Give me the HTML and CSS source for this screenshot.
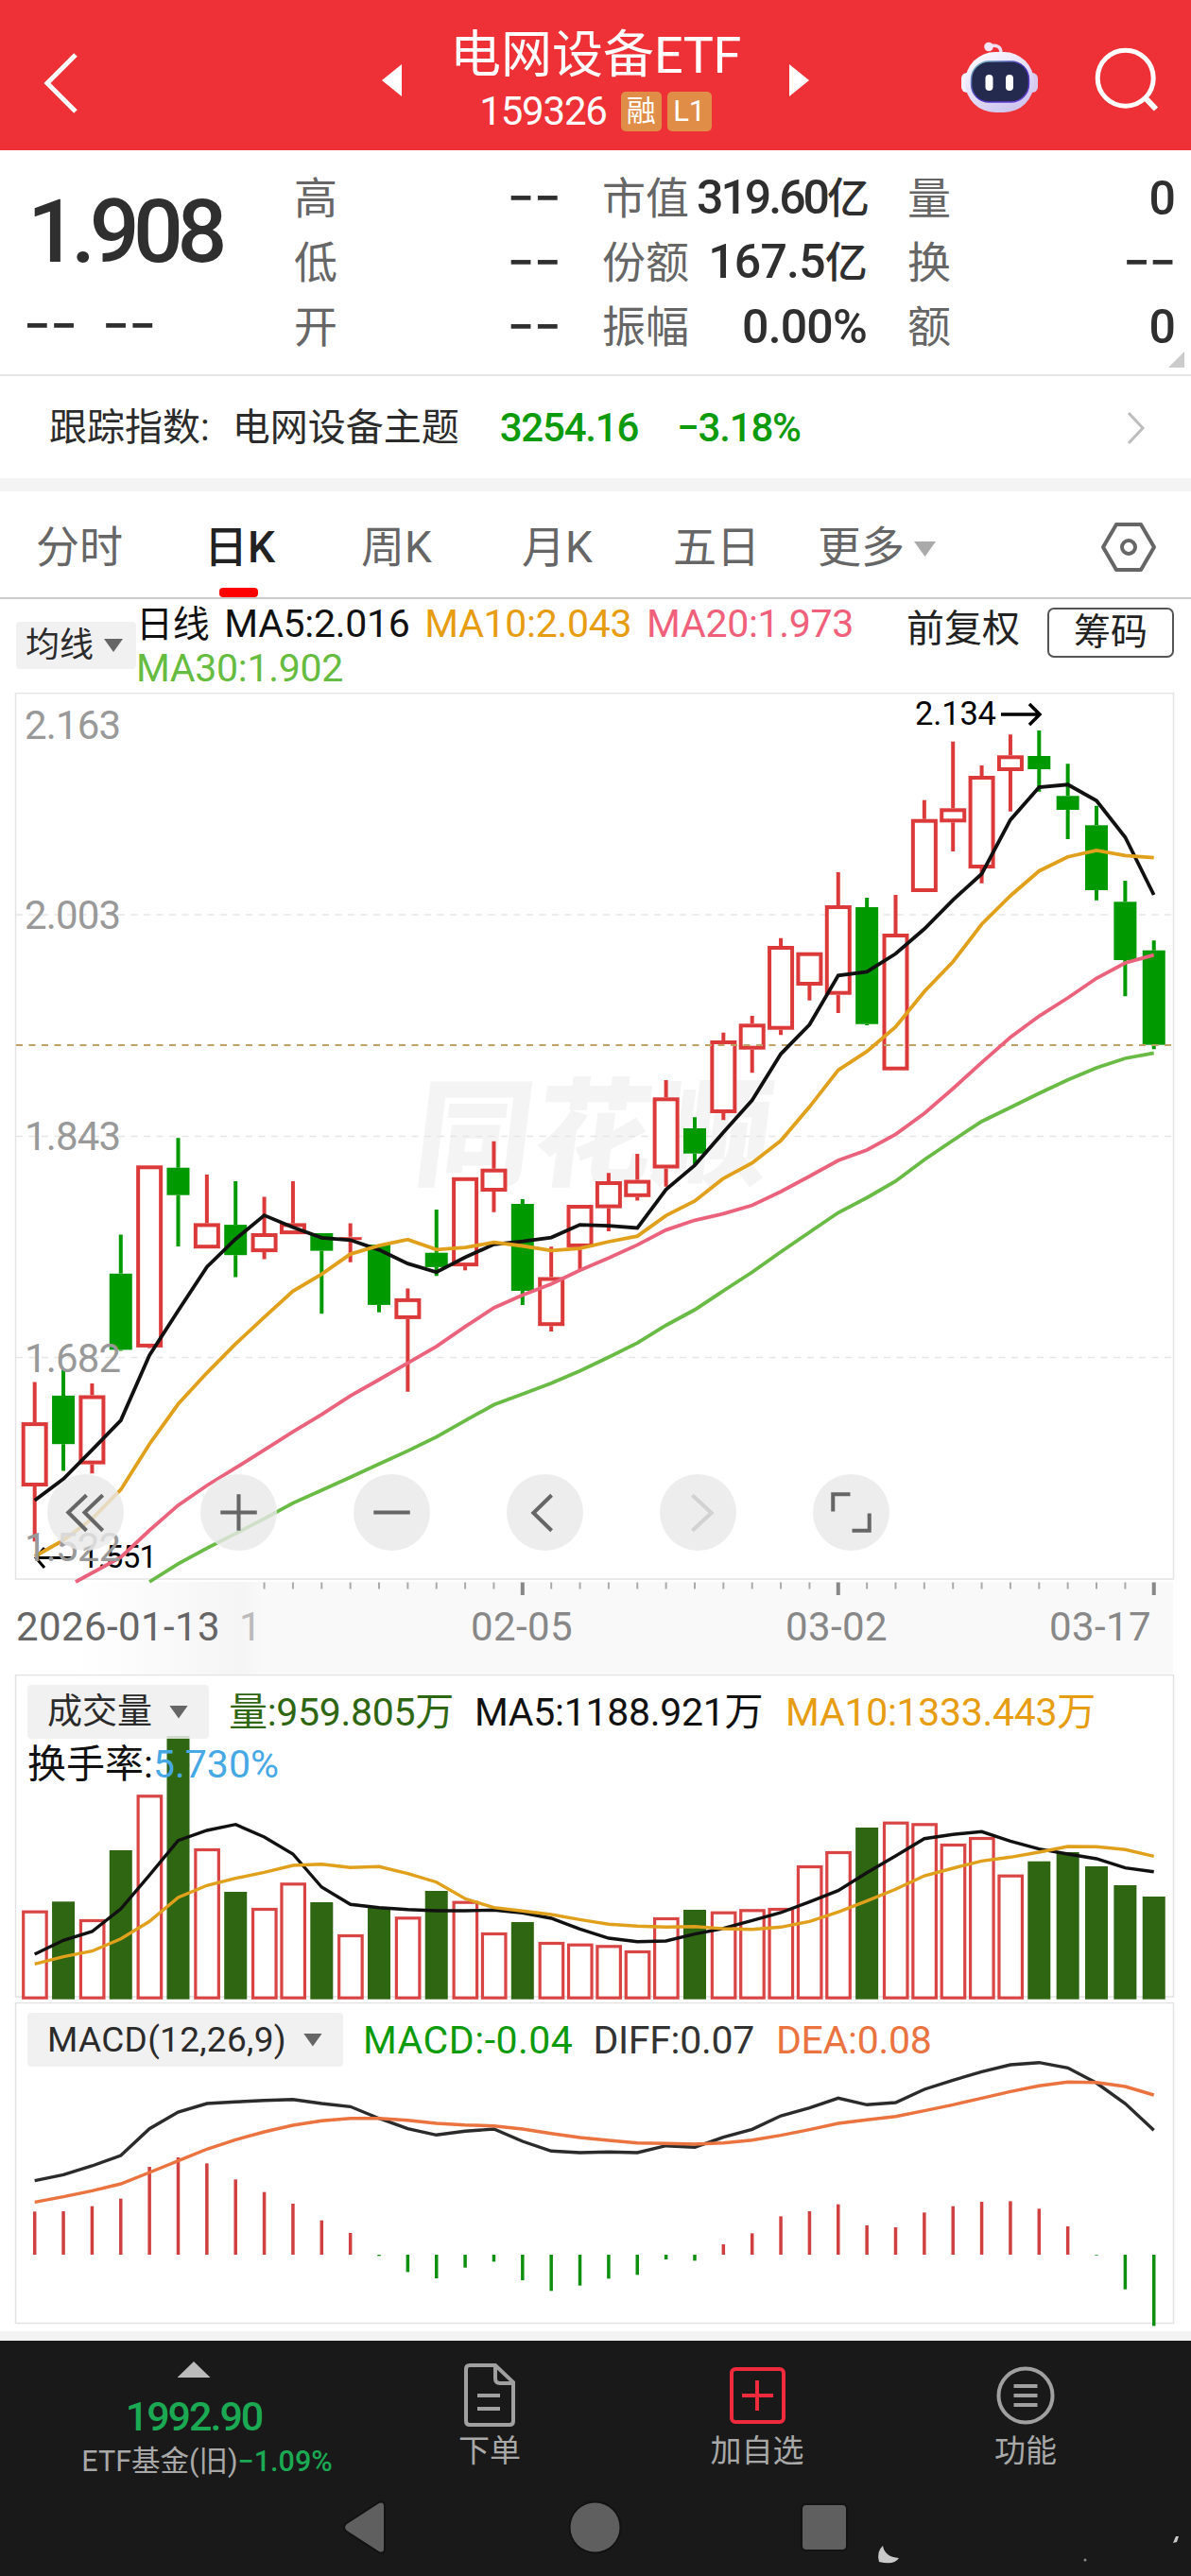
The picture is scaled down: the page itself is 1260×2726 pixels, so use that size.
FILE: index.html
```html
<!DOCTYPE html>
<html lang="zh-CN">
<head>
    <meta charset="UTF-8">
    <meta name="viewport" content="width=device-width, initial-scale=1.0">
    <title>电网设备ETF 159326</title>
    <link rel="stylesheet" href="styles.css">
</head>
<body>
    <header class="header">
        <svg class="back" width="40" height="68" viewBox="0 0 40 68"><path d="M35 4 L5 34 L35 64" fill="none" stroke="#fff" stroke-width="5"/></svg>
        <svg class="prev" width="21" height="34" viewBox="0 0 21 34"><path d="M21 0 V34 L0 17Z" fill="#fff"/></svg>
        <div class="title">
            <div class="name">电网设备<span class="etf">ETF</span></div>
            <div class="code"><span class="num">159326</span><span class="badge">融</span><span class="badge l1">L1</span></div>
        </div>
        <svg class="next" width="21" height="34" viewBox="0 0 21 34"><path d="M0 0 V34 L21 17Z" fill="#fff"/></svg>
        <svg class="robot" width="82" height="78" viewBox="1017 42 82 78">
            <defs>
                <linearGradient id="head" x1="0" y1="0" x2="0.6" y2="1">
                    <stop offset="0" stop-color="#fff"/>
                    <stop offset="0.6" stop-color="#e4dcfa"/>
                    <stop offset="1" stop-color="#cfc6ee"/>
                </linearGradient>
                <linearGradient id="rim" x1="0" y1="0" x2="1" y2="1">
                    <stop offset="0" stop-color="#7fc9c4"/>
                    <stop offset="0.5" stop-color="#4630b8"/>
                    <stop offset="1" stop-color="#7044e0"/>
                </linearGradient>
            </defs>
            <path d="M1046 49 Q1059 46 1059 56" fill="none" stroke="#efdcf0" stroke-width="3.5"/>
            <circle cx="1046" cy="49.500" r="4.800" fill="#f4e6f6"/>
            <rect x="1017" y="77" width="12" height="21" rx="6" fill="#f4f0fc"/>
            <rect x="1086" y="77" width="12" height="21" rx="6" fill="#d9c9ee"/>
            <rect x="1021" y="55" width="73" height="64" rx="32" fill="url(#head)"/>
            <rect x="1027.500" y="65" width="61" height="43" rx="19" fill="#232a4d" stroke="url(#rim)" stroke-width="1.500"/>
            <rect x="1042.500" y="79" width="8" height="17" rx="4" fill="#fff"/>
            <rect x="1064" y="79" width="8" height="17" rx="4" fill="#fff"/>
        </svg>
        <svg class="search" width="68" height="68" viewBox="0 0 68 68"><circle cx="32.700" cy="32.700" r="29.500" fill="none" stroke="#fff" stroke-width="5"/><path d="M53 53 L65 65.500" stroke="#fff" stroke-width="6"/></svg>
    </header>

    <section class="quote">
        <div class="last">
            <div class="price">1.908</div>
            <div class="change"><span>−−</span><span>−−</span></div>
        </div>
        <dl class="col c1">
            <div><dt>高</dt><dd>−−</dd></div>
            <div><dt>低</dt><dd>−−</dd></div>
            <div><dt>开</dt><dd>−−</dd></div>
        </dl>
        <dl class="col c2">
            <div><dt>市值</dt><dd class="tight">319.60<i>亿</i></dd></div>
            <div><dt>份额</dt><dd>167.5<i>亿</i></dd></div>
            <div><dt>振幅</dt><dd>0.00%</dd></div>
        </dl>
        <dl class="col c3">
            <div><dt>量</dt><dd>0</dd></div>
            <div><dt>换</dt><dd>−−</dd></div>
            <div><dt>额</dt><dd>0</dd></div>
        </dl>
        <div class="corner"></div>
    </section>

    <section class="index">
        <span>跟踪指数:</span>
        <span class="theme">电网设备主题</span>
        <span class="green">3254.16</span>
        <span class="green percent">−3.18%</span>
        <svg width="20" height="36" viewBox="0 0 20 36"><path d="M2 2 L17 18 L2 34" fill="none" stroke="#bdbdbd" stroke-width="3"/></svg>
    </section>

    <nav class="tabs">
        <span class="tab">分时</span>
        <span class="tab active">日K</span>
        <span class="tab">周K</span>
        <span class="tab">月K</span>
        <span class="tab">五日</span>
        <span class="tab more">更多<i class="tri"></i></span>
        <svg width="60" height="54" viewBox="0 0 60 54"><path d="M17 3 H43 L57 27 L43 51 H17 L3 27Z" fill="none" stroke="#666" stroke-width="4" stroke-linejoin="round"/><circle cx="30" cy="27" r="7" fill="none" stroke="#666" stroke-width="4"/></svg>
    </nav>

    <section class="ma">
        <div class="drop avg">均线<i class="tri"></i></div>
        <div class="legend">
            <span>日线</span> <span>MA5:2.016</span> <span class="orange">MA10:2.043</span> <span class="pink">MA20:1.973</span><br><span class="lime">MA30:1.902</span>
        </div>
        <span class="adjust">前复权</span>
        <span class="chip">筹码</span>
    </section>

    <section class="kline">
        <svg id="kline" width="1260" height="957" viewBox="0 733 1260 957"></svg>
        <div class="tools">
            <span><svg viewBox="0 0 80 80"><path d="M41 22 L22 40 L41 59 M58 22 L39 40 L58 59"/></svg></span>
            <span><svg viewBox="0 0 80 80"><path d="M21 40 H59 M40 21 V59"/></svg></span>
            <span><svg viewBox="0 0 80 80"><path d="M21 40 H59"/></svg></span>
            <span><svg viewBox="0 0 80 80"><path d="M47 22 L28 40.500 L47 59"/></svg></span>
            <span class="off"><svg viewBox="0 0 80 80"><path d="M34 22 L54 40.500 L34 59"/></svg></span>
            <span><svg viewBox="0 0 80 80"><path d="M39 21 H21 V39 M41 59 H59 V41"/></svg></span>
        </div>
    </section>
    <div class="dates">
        <span class="first">2026-01-13</span><span class="fade">1</span><span class="d2">02-05</span><span class="d3">03-02</span><span class="d4">03-17</span>
    </div>

    <section class="volume">
        <svg id="volume" width="1260" height="347" viewBox="0 1772 1260 347"></svg>
        <div class="panel-head">
            <div class="row">
                <div class="drop">成交量<i class="tri"></i></div>
                <span class="vol">量:959.805万</span><span class="ma5">MA5:1188.921万</span><span class="orange">MA10:1333.443万</span>
            </div>
            <div class="turnover">换手率:<span class="blue">5.730%</span></div>
        </div>
    </section>

    <section class="macd">
        <svg id="macd" width="1260" height="348" viewBox="0 2119 1260 348"></svg>
        <div class="panel-head">
            <div class="row">
                <div class="drop">MACD(12,26,9)<i class="tri"></i></div>
                <span class="green">MACD:-0.04</span><span class="diff">DIFF:0.07</span><span class="dea">DEA:0.08</span>
            </div>
        </div>
    </section>

    <footer class="footer">
        <div class="actions">
            <div class="market">
                <i class="up"></i>
                <div class="value">1992.90</div>
                <div class="sub">ETF基金(旧)<b>−1.09%</b></div>
            </div>
            <div class="action a1">
                <svg width="60" height="70" viewBox="0 0 60 70" fill="none" stroke="#a0a0a0" stroke-width="4"><path d="M36 4 H9 Q5 4 5 8 V63 Q5 67 9 67 H51 Q55 67 55 63 V22Z M36 4 V18 Q36 23 41 23 H54 M17 36 H41 M17 50 H41"/></svg>
                <span>下单</span>
            </div>
            <div class="action a2">
                <svg width="60" height="70" viewBox="0 0 60 70" fill="none" stroke="#ee2a3c" stroke-width="4"><rect x="3" y="8" width="55" height="56" rx="4"/><path d="M14 36 H47 M30 20 V52"/></svg>
                <span>加自选</span>
            </div>
            <div class="action a3">
                <svg width="62" height="70" viewBox="0 0 62 70" fill="none" stroke="#a0a0a0" stroke-width="4"><circle cx="31" cy="36" r="28.500"/><path d="M18.500 26 H43.500 M18.500 36 H43.500 M18.500 46 H43.500"/></svg>
                <span>功能</span>
            </div>
        </div>
        <svg class="system" width="1260" height="86" viewBox="0 2640 1260 86">
            <g fill="#5f5f5f" stroke="#121212" stroke-width="4" paint-order="stroke">
                <path d="M367 2671 L401 2649 Q406 2647 406 2652 V2697 Q406 2702 401 2700 L367 2678 Q363 2674.500 367 2671Z"/>
                <circle cx="629.500" cy="2674.500" r="26"/>
                <rect x="849" y="2651" width="46" height="47" rx="4"/>
            </g>
            <path d="M930 2711 Q927 2700 934 2694 Q936 2706 951 2707 Q946 2715 930 2711Z" fill="#c9c9c9"/>
            <path d="M1241 2691 L1244 2684 H1247 L1245 2690Z" fill="#ccc"/>
            <circle cx="1148" cy="2709" r="1.500" fill="#888"/>
        </svg>
    </footer>

    <script src="chart.js"></script>
</body>
</html>
```

FILE: styles.css
```css
* {
    box-sizing: border-box;
}
body {
    margin: 0;
    width: 1260px;
    background-color: #fff;
    color: #222;
    font-family: Roboto, "Noto Sans CJK SC", sans-serif;
    line-height: 1;
}
i, b {
    font-style: normal;
    font-weight: inherit;
}
svg {
    display: block;
    flex: none;
}
.green { color: #0d9a0d; }
.orange { color: #e79d12; }
.pink { color: #f0607a; }
.lime { color: #66bc40; }
.blue { color: #46a9e6; }
.tri {
    display: inline-block;
    width: 20px;
    height: 14px;
    background-color: #666;
    clip-path: polygon(0 0, 100% 0, 50% 100%);
}

/* header */
.header {
    display: flex;
    align-items: flex-start;
    height: 159px;
    background-color: #ee3136;
    color: #fff;
}
.back { margin: 54px 0 0 45px; }
.prev { margin: 68px 0 0 319px; }
.title {
    width: 410px;
    padding-top: 30px;
    display: flex;
    flex-direction: column;
    align-items: center;
}
.name {
    font-size: 54px;
    line-height: 58px;
    white-space: nowrap;
}
.etf { letter-spacing: -0.5px; }
.code {
    display: flex;
    align-items: center;
    height: 42px;
    margin-top: 9px;
    font-size: 42px;
}
.num { letter-spacing: -1.2px; }
.badge {
    width: 43px;
    height: 42px;
    margin-left: 15px;
    border-radius: 5px;
    background-color: #e08d47;
    font-size: 31px;
    line-height: 41px;
    text-align: center;
}
.badge.l1 {
    width: 47px;
    margin-left: 6px;
}
.next { margin: 68px 0 0 0; }
.robot { margin: 42px 0 0 161px; }
.search { margin: 50px 0 0 59px; }

/* quote */
.quote {
    position: relative;
    display: flex;
    height: 239px;
    border-bottom: 2px solid #e6e6e6;
    color: #2f2f2f;
}
.last { width: 311px; }
.price {
    padding: 40px 0 0 29px;
    font-size: 93px;
    line-height: 93px;
    font-weight: 500;
    letter-spacing: -6.5px;
}
.change {
    display: flex;
    gap: 27px;
    margin: 28px 0 0 25px;
    font-size: 50px;
    line-height: 50px;
    font-weight: 500;
}
.col {
    margin: 0;
    padding-top: 17px;
}
.col div {
    display: flex;
    justify-content: space-between;
    align-items: center;
    height: 68px;
}
.c1 { width: 282px; }
.c2 { width: 280px; margin-left: 44px; }
.c3 { width: 283px; margin-left: 43px; }
.col dt {
    color: #666;
    font-size: 46px;
    line-height: 68px;
    white-space: nowrap;
}
.col dd {
    margin: 0;
    font-size: 50px;
    line-height: 68px;
    font-weight: 500;
    letter-spacing: -0.8px;
    white-space: nowrap;
}
.col .tight { letter-spacing: -3px; }
.c1 dd { letter-spacing: 0; }
.col dd i { font-size: 45px; }
.corner {
    position: absolute;
    right: 7px;
    bottom: 7px;
    width: 17px;
    height: 17px;
    background-color: #ccc;
    clip-path: polygon(100% 0, 100% 100%, 0 100%);
}

/* index */
.index {
    display: flex;
    align-items: center;
    height: 122px;
    padding: 2px 48px 0 52px;
    border-bottom: 14px solid #f4f4f4;
    font-size: 40px;
    color: #2b2b2b;
}
.index .theme { margin-left: 24px; }
.index .green {
    margin-left: 43px;
    font-size: 42px;
    font-weight: 500;
    letter-spacing: -1.2px;
}
.index .percent { margin-left: 41px; }
.index svg { margin-left: auto; }

/* tabs */
.tabs {
    display: flex;
    align-items: center;
    height: 114px;
    padding: 6px 36px 0 38px;
    border-bottom: 2px solid #ccc;
    color: #666;
    font-size: 46px;
}
.tab {
    position: relative;
    line-height: 108px;
    white-space: nowrap;
    width: 90px;
}
.tab:nth-child(2) { margin-left: 88px; width: 74px; }
.tab:nth-child(3) { margin-left: 92px; width: 78px; }
.tab:nth-child(4) { margin-left: 92px; width: 78px; }
.tab:nth-child(5) { margin-left: 82px; width: 93px; }
.tab.more { margin-left: 60px; width: 125px; }
.active {
    color: #222;
    font-weight: 500;
}
.active::after {
    content: "";
    position: absolute;
    left: 16px;
    bottom: 1px;
    width: 41px;
    height: 10px;
    border-radius: 4px;
    background-color: #f00;
}
.more .tri {
    width: 23px;
    height: 16px;
    margin-left: 10px;
    vertical-align: 6px;
    background-color: #aaa;
}
.tabs svg { margin-left: auto; }

/* moving averages */
.ma {
    display: flex;
    align-items: flex-start;
    height: 99px;
    padding-left: 17px;
}
.drop {
    display: flex;
    align-items: center;
    background-color: rgba(238, 238, 238, 0.85);
    border-radius: 4px;
    color: #2b2b2b;
}
.avg {
    width: 127px;
    height: 50px;
    margin-top: 24px;
    padding-left: 10px;
    font-size: 36px;
}
.avg .tri { margin-left: 11px; }
.legend {
    width: 811px;
    margin-left: 0;
    padding-top: 3px;
    color: #111;
    font-size: 41px;
    line-height: 46px;
    letter-spacing: -0.3px;
    word-spacing: 6px;
    white-space: nowrap;
}
.legend span:first-child { font-size: 39px; }
.adjust {
    margin-top: 12px;
    margin-left: 4px;
    font-size: 40px;
    line-height: 40px;
    white-space: nowrap;
}
.chip {
    width: 134px;
    height: 53px;
    margin: 9px 0 0 29px;
    border: 2px solid #555;
    border-radius: 7px;
    font-size: 39px;
    line-height: 48px;
    text-align: center;
}

/* candle chart */
.kline {
    position: relative;
    height: 957px;
}
.tools {
    position: absolute;
    left: 50px;
    top: 827px;
    display: flex;
    gap: 81px;
}
.tools span {
    width: 81px;
    height: 81px;
    border-radius: 50%;
    background-color: rgba(232, 232, 232, 0.8);
}
.tools svg {
    width: 81px;
    height: 81px;
    fill: none;
    stroke: #666;
    stroke-width: 4;
}
.tools .off svg { stroke: #d2d2d2; }
.dates {
    display: flex;
    width: 1224px;
    height: 98px;
    margin: -16px 0 0 17px;
    padding-top: 24px;
    background: linear-gradient(90deg, #fff 60px, #f5f5f5 238px, #f9f9f9 260px);
    color: #888;
    font-size: 42px;
    line-height: 48px;
    letter-spacing: 0.4px;
    white-space: nowrap;
}
.first { color: #666; width: 236px; }
.fade { color: #bbb; width: 245px; }
.d2 { width: 333px; }
.d3 { width: 279px; }

/* lower panels */
.volume { position: relative; height: 347px; }
.macd {
    position: relative;
    height: 358px;
    border-bottom: 10px solid #f3f3f3;
}
.panel-head {
    position: absolute;
    left: 29px;
    top: 11px;
    font-size: 41px;
    white-space: nowrap;
}
.row {
    display: flex;
    align-items: center;
    height: 57px;
}
.row .drop {
    height: 57px;
    padding: 0 22px 0 21px;
    font-size: 37px;
}
.row .tri { margin-left: 18px; }
.row > span {
    padding-top: 2px;
    letter-spacing: -0.3px;
}
.vol { margin-left: 21px; color: #2f6612; }
.ma5 { margin-left: 22px; color: #111; }
.row .ma5 + .orange { margin-left: 24px; }
.turnover {
    margin-top: 7px;
    color: #111;
}
.macd .drop { letter-spacing: 0.3px; }
.row .green { margin-left: 21px; letter-spacing: 0.5px; }
.diff { margin-left: 21px; color: #333; }
.dea { margin-left: 23px; color: #ea733f; }

/* bottom bar */
.footer {
    height: 249px;
    background-color: #191919;
    color: #a8a8a8;
}
.actions {
    display: flex;
    height: 163px;
}
.market {
    width: 410px;
    display: flex;
    flex-direction: column;
    align-items: center;
    padding-top: 22px;
}
.up {
    width: 35px;
    height: 17px;
    background-color: #bbb;
    clip-path: polygon(50% 0, 100% 100%, 0 100%);
}
.value {
    margin-top: 20px;
    color: #1ba953;
    font-size: 43px;
    font-weight: 500;
    letter-spacing: -2px;
}
.sub {
    margin: 11px 0 0 28px;
    font-size: 30.5px;
    white-space: nowrap;
}
.sub b {
    color: #1ba953;
    font-weight: 500;
}
.action {
    width: 120px;
    display: flex;
    flex-direction: column;
    align-items: center;
    padding-top: 22px;
    font-size: 33px;
}
.action span { margin-top: 8px; }
.a1 { margin-left: 48px; }
.a2 { margin-left: 163px; }
.a3 { margin-left: 164px; }
```

FILE: chart.js
```js
const STEP = 30.36;
const x = i => 36.7 + STEP * i;
const RED = '#dc3a3a';
const GREEN = '#009900';

// [up, high, body top, body bottom, low]
const candles = [
    [1, 1462.5, 1505.1, 1573, 1631.2], [0, 1449.3, 1476.9, 1528.2, 1556.5], [1, 1464.1, 1476.5, 1549.6, 1559.2],
    [0, 1306.5, 1347.8, 1428.4, 1429.4], [1, 1233.3, 1233.3, 1425.9, 1426.6], [0, 1204.3, 1235.7, 1264.7, 1318.9],
    [1, 1243, 1294.4, 1321.2, 1321.2], [0, 1250, 1296.1, 1328.2, 1351.5], [1, 1266.5, 1305, 1325.1, 1332.6],
    [1, 1250, 1294.4, 1306.1, 1306.1], [0, 1305, 1305, 1323.6, 1390.2], [1, 1294.4, 1308.7, 1312.7, 1335.7],
    [0, 1317.1, 1317.1, 1380.9, 1388.7], [1, 1363.6, 1373.9, 1395.9, 1472.8], [0, 1279.9, 1325.7, 1340.9, 1350.2],
    [1, 1245.8, 1245.8, 1340.1, 1344.3], [1, 1207.7, 1236.7, 1261, 1282.7], [0, 1268.9, 1274, 1366, 1380.9],
    [1, 1319.2, 1351.5, 1403.2, 1409.1], [1, 1275, 1275, 1319.9, 1343.3], [1, 1241.3, 1250, 1278.6, 1303],
    [1, 1221, 1248.6, 1266.8, 1270.6], [1, 1143, 1161.3, 1236.5, 1255.8], [0, 1182.3, 1194, 1220.7, 1231.7],
    [1, 1092.7, 1101, 1178, 1185.3], [1, 1075, 1083.3, 1110.7, 1135.3], [1, 992.7, 1001, 1089.7, 1095.3],
    [1, 1007.7, 1007.7, 1043, 1058.7], [1, 923, 958, 1052.7, 1072], [0, 950, 960, 1083.7, 1085],
    [1, 947, 988, 1132.7, 1132.7], [1, 846.7, 866.7, 944, 944], [1, 784.7, 855.3, 870.3, 901],
    [1, 810, 821, 919, 934.7], [1, 777.3, 799.3, 816, 858.7], [0, 773, 800, 814, 837.7],
    [0, 808.3, 842.3, 857, 888], [0, 852.7, 873.3, 942, 952.7], [0, 932, 954.3, 1016, 1054.3],
    [0, 995.3, 1005.7, 1105.7, 1110.3]
];
const ma5 = [1587.8, 1565.1, 1534.4, 1503.1, 1434.2, 1387, 1340.6, 1311.2, 1286.1, 1298.8, 1309.9, 1312.3, 1322.6, 1337.1, 1346.3, 1330.5, 1316.8, 1313.7, 1309.6, 1296.1, 1297.2, 1299.5, 1258.9, 1233.1, 1198.3, 1164.3, 1115.3, 1084.3, 1032.3, 1028.3, 1009.3, 983, 952.3, 924.7, 867.7, 833, 830.3, 847.3, 886, 947];
const ma10 = [1647, 1629.8, 1607.4, 1576.4, 1528.2, 1485.8, 1452.8, 1422.2, 1393.9, 1366.4, 1348.4, 1327.1, 1318.1, 1311.6, 1322.3, 1320.2, 1314.7, 1318.5, 1323.3, 1321.2, 1314, 1308.1, 1286.4, 1270.9, 1247, 1230.7, 1207, 1171.3, 1132.3, 1112.7, 1086.7, 1049.3, 1017.7, 978, 948, 921.7, 906.7, 900, 905.3, 907.7];
const ma20 = [1648, 1619.5, 1592.9, 1572, 1553.4, 1534.4, 1515.2, 1496.9, 1477.2, 1460, 1442.4, 1424.9, 1403.9, 1384, 1370.5, 1358.7, 1344.3, 1331.3, 1317.4, 1301.6, 1291.3, 1284.4, 1275.5, 1261, 1244.8, 1228, 1217, 1200.3, 1178.3, 1152, 1124.3, 1097.7, 1075.3, 1056, 1035.3, 1019, 1010.7];
const ma30 = [1674, 1654.9, 1638.4, 1622.9, 1607.1, 1590.6, 1577.1, 1563.3, 1549.2, 1535.4, 1520.6, 1503.4, 1486.5, 1475.2, 1463.8, 1450.7, 1436.2, 1421.1, 1402.5, 1386, 1366, 1346.3, 1324.7, 1304, 1283.3, 1267.5, 1250, 1227.3, 1206.7, 1186.7, 1172, 1157, 1142.7, 1130, 1120, 1114.3];

function line(points, color, start = 0, head = '', width = 3.8) {
    const pts = points.map((y, i) => x(i + start).toFixed(1) + ',' + y.toFixed(1)).join(' ');
    return `<polyline points="${head} ${pts}" fill="none" stroke="${color}" stroke-width="${width}"/>`;
}

function label(tx, ty, text, size, width, color) {
    return `<text x="${tx}" y="${ty}" font-size="${size}" fill="${color}" textLength="${width}">${text}</text>`;
}

function drawKline() {
    let s = '<text transform="translate(435 1245) skewX(-7)" font-size="124" font-weight="900" fill="#f4f4f4" textLength="376">同花顺</text>';
    s += '<path d="M16.500 1671 V733.500 H1241.500 V1671 Z" fill="none" stroke="#e4e4e4" stroke-width="1.500"/>';
    [968, 1202.5, 1436.6].forEach(y => {
        s += `<path d="M17 ${y} H1241" stroke="#e6e6e6" stroke-width="1.500" stroke-dasharray="7 6.500"/>`;
    });
    candles.forEach(([up, high, top, bottom, low], i) => {
        const c = x(i);
        const color = up ? RED : GREEN;
        s += `<path d="M${c} ${high} V${top} M${c} ${bottom} V${low}" stroke="${color}" stroke-width="4"/>`;
        if (!up) {
            s += `<rect x="${c - 12}" y="${top}" width="24" height="${bottom - top}" fill="${color}"/>`;
        } else if (bottom - top < 5) {
            s += `<path d="M${c - 12} ${top + 2} H${c + 12}" stroke="${color}" stroke-width="3"/>`;
        } else {
            s += `<rect x="${c - 12}" y="${top + 2}" width="24" height="${bottom - top - 4}" fill="#fff" stroke="${color}" stroke-width="4"/>`;
        }
    });
    s += '<path d="M17 1106 H1241" stroke="#bfa366" stroke-width="2" stroke-dasharray="7 6.500"/>';
    s += '<path d="M38 1648.500 H78 M47 1638 L38 1648.500 L47 1659" fill="none" stroke="#000" stroke-width="3"/>';
    s += label(86, 1659, '1.551', 33, 80, '#000');
    s += '<path d="M1059 756 H1100 M1089 745 L1100 756 L1089 767" fill="none" stroke="#000" stroke-width="3.500"/>';
    s += label(968, 767, '2.134', 34.5, 86, '#000');
    s += line(ma5, '#111') + line(ma10, '#e0a01c');
    s += line(ma20, '#ea627c', 3, '80,1674') + line(ma30, '#6abb45', 4);
    [[782, '2.163'], [982.5, '2.003'], [1217, '1.843'], [1451.5, '1.682'], [1652, '1.522']].forEach(([y, t]) => {
        s += label(26, y, t, 42, 102, '#999');
    });
    // date ticks
    for (let i = 8; i < 40; i++) {
        const big = i === 17 || i === 28 || i === 39;
        s += `<path d="M${x(i)} 1674.500 V${big ? 1688 : 1681.5}" stroke="${big ? '#888' : '#aaa'}" stroke-width="${big ? 4 : 2}"/>`;
    }
    document.getElementById('kline').innerHTML = s;
}

// [up, bar top]
const volumes = [
    [1, 2021.7], [0, 2012.3], [1, 2031], [0, 1958], [1, 1899.3], [0, 1837], [1, 1956], [0, 2002], [1, 2019], [1, 1992.3],
    [0, 2013], [1, 2047], [0, 2019], [1, 2028.3], [0, 2001], [1, 2011.7], [1, 2045], [0, 2034], [1, 2055], [1, 2056.7],
    [1, 2058.3], [1, 2064], [1, 2029], [0, 2021], [1, 2022.7], [1, 2020.3], [1, 2019], [1, 1974], [1, 1959], [0, 1934],
    [1, 1927.7], [1, 1929.3], [1, 1951], [1, 1944], [1, 1983.7], [0, 1969.7], [0, 1960], [0, 1975], [0, 1995], [0, 2007]
];
const vma5 = [924, 880, 852, 780, 673, 563, 531, 512, 552, 606, 711, 766, 776, 782, 786, 786, 784, 793, 810, 844, 873, 884, 882, 860, 842, 817, 792, 758, 722, 665, 612, 557, 544, 535, 565, 590, 606, 621, 650, 662];
const vma10 = [955, 932, 914, 875, 820, 744, 706, 683, 664, 642, 638, 649, 646, 668, 695, 748, 776, 787, 798, 814, 829, 835, 838, 836, 843, 845, 838, 820, 790, 755, 718, 675, 651, 628, 616, 600, 582, 583, 592, 613];

function drawVolume() {
    let s = '<path d="M16.500 2113 V1772.500 H1241.500 V2113 Z" fill="none" stroke="#e2e2e2" stroke-width="1.500"/>';
    volumes.forEach(([up, top], i) => {
        if (up) {
            s += `<rect x="${x(i) - 12}" y="${top + 1.5}" width="24.500" height="${2112.7 - top}" fill="#fff" stroke="#d94444" stroke-width="3.200"/>`;
        } else {
            s += `<rect x="${x(i) - 12}" y="${top}" width="24" height="${2115.7 - top}" fill="#2f6612"/>`;
        }
    });
    s += line(vma5.map(v => 1760 + v / 3), '#111', 0, '', 3.4);
    s += line(vma10.map(v => 1760 + v / 3), '#e0a01c', 0, '', 3.4);
    document.getElementById('volume').innerHTML = s;
}

const bars = [691, 690, 674, 650, 549, 519, 538, 589, 629, 666, 719, 759, 832, 883, 903, 869, 850, 909, 943, 926, 904, 892, 843, 847, 795, 760, 706, 690, 668, 735, 741, 694, 674, 660, 658, 682, 738, 830, 938, 1054];
const diff = [593, 574, 546, 513, 428, 375, 348, 343, 338, 335, 348, 358, 395, 428, 448, 436, 429, 468, 499, 504, 502, 504, 482, 487, 455, 430, 387, 362, 331, 352, 345, 303, 274, 247, 225, 218, 235, 283, 348, 433];
const dea = [661, 644, 625, 603, 567, 530, 493, 463, 438, 417, 403, 395, 395, 401, 411, 416, 419, 429, 443, 456, 465, 473, 475, 477, 473, 464, 449, 431, 411, 400, 389, 371, 352, 331, 310, 292, 280, 281, 294, 321];

function drawMacd() {
    let s = '<path d="M16.500 2458.500 V2119.500 H1241.500 V2458.500 Z" fill="none" stroke="#e2e2e2" stroke-width="1.500"/>';
    bars.forEach((v, i) => {
        s += `<path d="M${x(i)} 2386 V${2110 + v / 3}" stroke="${v < 828 ? '#d04040' : '#0f8f0f'}" stroke-width="3.500"/>`;
    });
    s += line(diff.map(v => 2110 + v / 3), '#2b2b2b', 0, '', 3.4);
    s += line(dea.map(v => 2110 + v / 3), '#ea733f', 0, '', 3.4);
    document.getElementById('macd').innerHTML = s;
}

drawKline();
drawVolume();
drawMacd();
```
